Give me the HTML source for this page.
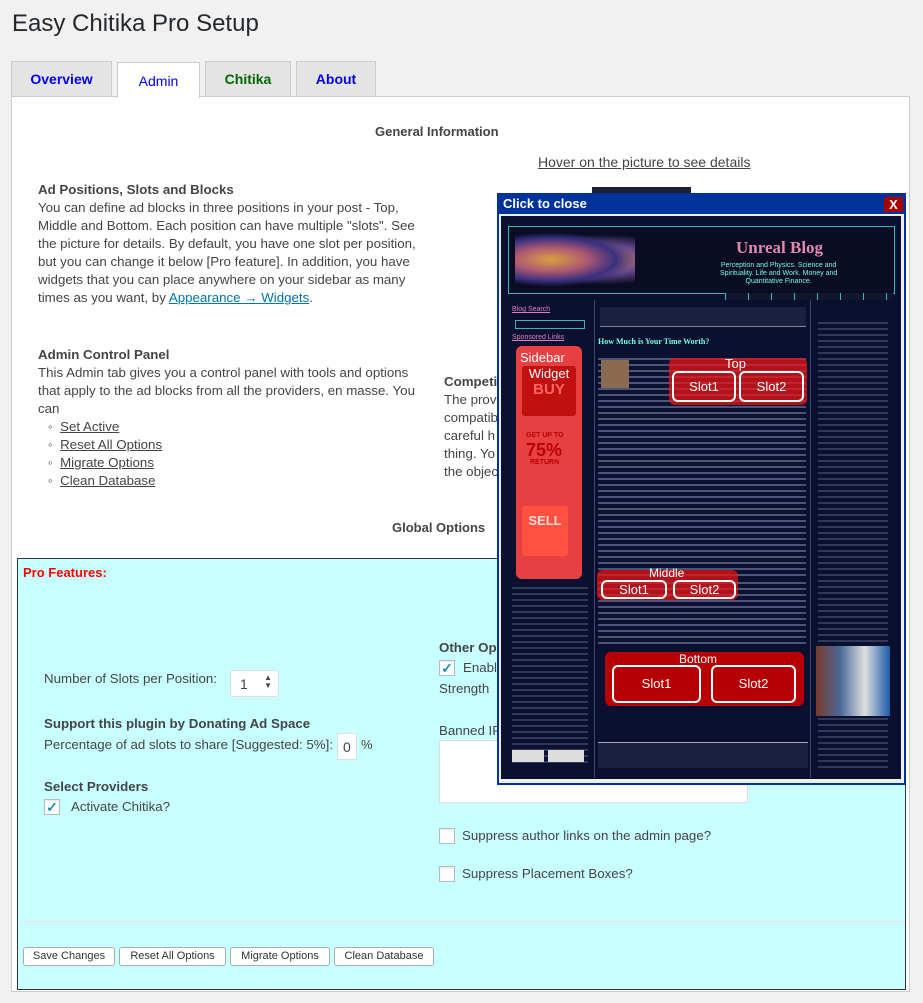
<!DOCTYPE html>
<html><head><meta charset="utf-8"><style>
*{box-sizing:border-box}
body{margin:0;width:923px;height:1003px;background:#f1f1f1;font-family:"Liberation Sans",sans-serif;color:#444;font-size:14px;position:relative;overflow:hidden}
.a{position:absolute;white-space:nowrap}
h1{position:absolute;left:12px;top:10px;margin:0;font-size:24px;font-weight:normal;color:#23282d}
.tab{position:absolute;top:61px;height:36px;border:1px solid #ccc;background:#e4e4e4;font-weight:bold;font-size:14px;text-align:center;line-height:34px}
.panel{position:absolute;left:11px;top:96px;width:899px;height:896px;background:#fff;border:1px solid #ccc}
a,.u{color:#0073aa;text-decoration:underline}
.lk{color:#444;text-decoration:underline}
.cb{position:absolute;width:16px;height:16px;border:1px solid #b4b9be;background:#fff;box-shadow:inset 0 1px 2px rgba(0,0,0,.1)}
.btn{position:absolute;top:947px;height:19px;border:1px solid #aaa;border-radius:3px;background:#fff;font-size:11px;line-height:17px;text-align:center;color:#333}
.red{position:absolute;background:rgba(235,20,20,.75);border-radius:6px}
.slot{position:absolute;border:2px solid #fff;border-radius:6px;color:#fff;font-size:13px;text-align:center}
.txt{position:absolute;background:repeating-linear-gradient(#0b1030 0 2px,#4a5578 2px 4px,#0b1030 4px 6px)}
</style></head><body>
<h1>Easy Chitika Pro Setup</h1>
<div class="tab" style="left:11px;width:101px;color:#0000ee">Overview</div>
<div class="tab" style="left:205px;width:86px;color:#006600">Chitika</div>
<div class="tab" style="left:296px;width:80px;color:#0000ee">About</div>
<div class="panel"></div>
<div class="tab" style="left:117px;width:83px;top:62px;height:36px;background:#fff;border-bottom:none;color:#0000ee;font-weight:normal;line-height:36px">Admin</div>

<div class="a" style="left:375px;top:124px;font-weight:bold;font-size:13px">General Information</div>
<div class="a lk" style="left:538px;top:154px">Hover on the picture to see details</div>

<div class="a" style="left:38px;top:181px;line-height:18px;font-size:13.3px">
<b>Ad Positions, Slots and Blocks</b><br>
You can define ad blocks in three positions in your post - Top,<br>
Middle and Bottom. Each position can have multiple "slots". See<br>
the picture for details. By default, you have one slot per position,<br>
but you can change it below [Pro feature]. In addition, you have<br>
widgets that you can place anywhere on your sidebar as many<br>
times as you want, by <a>Appearance → Widgets</a>.</div>

<div class="a" style="left:38px;top:346px;line-height:18px;font-size:13.3px">
<b>Admin Control Panel</b><br>
This Admin tab gives you a control panel with tools and options<br>
that apply to the ad blocks from all the providers, en masse. You<br>
can</div>
<div class="a" style="left:48px;top:418px;line-height:18px;font-size:13.3px">
◦ &nbsp;<span class="lk">Set Active</span><br>◦ &nbsp;<span class="lk">Reset All Options</span><br>◦ &nbsp;<span class="lk">Migrate Options</span><br>◦ &nbsp;<span class="lk">Clean Database</span></div>

<div class="a" style="left:444px;top:373px;line-height:18px;font-size:13.3px"><b>Competi</b><br>The prov<br>compatib<br>careful h<br>thing. Yo<br>the objec</div>
<div class="a" style="left:392px;top:520px;font-weight:bold;font-size:13px">Global Options</div>

<div style="position:absolute;left:17px;top:558px;width:889px;height:432px;background:#c8ffff;border:1px solid #333"></div>
<div class="a" style="left:23px;top:565px;color:#f00;font-weight:bold;font-size:13px">Pro Features:</div>
<div class="a" style="left:44px;top:671px;font-size:13.3px">Number of Slots per Position:</div>
<div style="position:absolute;left:230px;top:670px;width:49px;height:27px;background:#fff;border:1px solid #ddd;border-radius:3px;font-size:14px;padding:5px 9px">1<span style="position:absolute;right:6px;top:3px;font-size:8px;line-height:8px">▲<br>▼</span></div>
<div class="a" style="left:44px;top:716px;font-weight:bold;font-size:13.3px">Support this plugin by Donating Ad Space</div>
<div class="a" style="left:44px;top:737px;font-size:13.3px">Percentage of ad slots to share [Suggested: 5%]:</div>
<div style="position:absolute;left:337px;top:733px;width:20px;height:27px;background:#fff;border:1px solid #ddd;font-size:14px;padding:5px 5px">0</div>
<div class="a" style="left:361px;top:737px;font-size:13px">%</div>
<div class="a" style="left:44px;top:779px;font-weight:bold;font-size:13.3px">Select Providers</div>
<div class="cb" style="left:44px;top:799px;color:#1e8cbe;font-size:14px;line-height:14px;text-align:center;font-weight:bold">✓</div>
<div class="a" style="left:71px;top:799px;font-size:13.3px">Activate Chitika?</div>

<div class="a" style="left:439px;top:640px;font-weight:bold;font-size:13.3px">Other Op</div>
<div class="cb" style="left:439px;top:660px;color:#1e8cbe;font-size:14px;line-height:14px;text-align:center;font-weight:bold">✓</div>
<div class="a" style="left:463px;top:660px;font-size:13.3px">Enabl</div>
<div class="a" style="left:439px;top:681px;font-size:13.3px">Strength</div>
<div class="a" style="left:439px;top:723px;font-size:13.3px">Banned IP</div>
<div style="position:absolute;left:439px;top:740px;width:309px;height:63px;background:#fff;border:1px solid #ddd"></div>
<div class="cb" style="left:439px;top:828px"></div>
<div class="a" style="left:462px;top:828px;font-size:13.3px">Suppress author links on the admin page?</div>
<div class="cb" style="left:439px;top:866px"></div>
<div class="a" style="left:462px;top:866px;font-size:13.3px">Suppress Placement Boxes?</div>
<div style="position:absolute;left:23px;top:921px;width:882px;height:2px;background:#e4eeee"></div>
<div class="btn" style="left:23px;width:92px">Save Changes</div>
<div class="btn" style="left:119px;width:107px">Reset All Options</div>
<div class="btn" style="left:230px;width:100px">Migrate Options</div>
<div class="btn" style="left:334px;width:100px">Clean Database</div>

<!-- popup -->
<div style="position:absolute;left:592px;top:187px;width:99px;height:7px;background:#1a1f33"></div>
<div style="position:absolute;left:497px;top:193px;width:409px;height:592px;background:#eee;border:2px solid #003399"></div>
<div style="position:absolute;left:499px;top:195px;width:405px;height:19px;background:#003399;color:#fff;font-weight:bold;font-size:13px;padding:1px 4px">Click to close</div>
<div style="position:absolute;left:884px;top:197px;width:19px;height:15px;background:#a00;color:#fff;font-weight:bold;font-size:13px;text-align:center;line-height:15px">X</div>
<div style="position:absolute;left:501px;top:216px;width:400px;height:563px;background:#0b1030"></div>
<div style="position:absolute;left:508px;top:226px;width:387px;height:68px;border:1px solid #3cb4b4;background:#090c22"></div>
<div style="position:absolute;left:515px;top:232px;width:120px;height:55px;background:radial-gradient(ellipse at 30% 50%,#d8a040 0,#b05a70 30%,#3a3080 55%,transparent 70%),radial-gradient(ellipse at 75% 50%,#c88050 0,#6a4a90 35%,transparent 65%)"></div>
<div class="a" style="left:736px;top:238px;font-family:'Liberation Serif',serif;font-weight:bold;font-size:17px;color:#e08ab0">Unreal Blog</div>
<div class="a" style="left:720px;top:262px;font-size:7px;color:#7fd;line-height:8px;text-align:center">Perception and Physics. Science and<br>Spirituality. Life and Work. Money and<br>Quantitative Finance.</div>
<div style="position:absolute;left:725px;top:293px;width:168px;height:7px;background:repeating-linear-gradient(90deg,#3cb4b4 0 1px,#101530 1px 23px)"></div>
<div style="position:absolute;left:594px;top:300px;width:1px;height:478px;background:#3a4a70"></div>
<div style="position:absolute;left:810px;top:300px;width:1px;height:478px;background:#3a4a70"></div>
<div class="a" style="left:512px;top:306px;font-size:7px;color:#e080c0;text-decoration:underline">Blog Search</div>
<div style="position:absolute;left:515px;top:320px;width:70px;height:9px;border:1px solid #3cb4b4"></div>
<div class="a" style="left:512px;top:334px;font-size:7px;color:#e080c0;text-decoration:underline">Sponsored Links</div>
<div style="position:absolute;left:600px;top:307px;width:206px;height:20px;background:#1a2040;border-bottom:1px solid #888"></div>
<div class="a" style="left:598px;top:337px;font-family:'Liberation Serif',serif;font-weight:bold;font-size:8px;color:#7fd">How Much is Your Time Worth?</div>
<div class="txt" style="left:598px;top:356px;width:208px;height:220px"></div>
<div class="txt" style="left:598px;top:580px;width:208px;height:66px"></div>
<div style="position:absolute;left:601px;top:360px;width:28px;height:28px;background:#8a6a50"></div>
<div style="position:absolute;left:598px;top:742px;width:210px;height:26px;background:#1a2040;border-top:1px solid #aaa"></div>
<div class="txt" style="left:818px;top:320px;width:70px;height:450px;opacity:.6"></div>
<div style="position:absolute;left:816px;top:646px;width:74px;height:70px;background:linear-gradient(90deg,#7a3a2a,#4a6a9a 33%,#e0e0e0 66%,#1a5aaa)"></div>
<div class="txt" style="left:512px;top:585px;width:76px;height:180px;opacity:.6"></div>
<div style="position:absolute;left:512px;top:750px;width:32px;height:12px;background:#ddd"></div>
<div style="position:absolute;left:548px;top:750px;width:36px;height:12px;background:#ddd"></div>

<div class="red" style="left:516px;top:346px;width:66px;height:233px;background:rgba(255,70,70,.9)">
<div class="a" style="left:4px;top:4px;color:#fff;font-size:13px">Sidebar</div>
<div style="position:absolute;left:6px;top:20px;width:54px;height:50px;background:#c01010;border-radius:3px;color:#fff;font-size:13px;text-align:center">Widget<br><b style="font-size:15px;color:#f66">BUY</b></div>
<div class="a" style="left:10px;top:86px;color:#b00;font-size:7px;font-weight:bold">GET UP TO</div>
<div class="a" style="left:10px;top:94px;color:#b00;font-size:18px;font-weight:bold">75%</div>
<div class="a" style="left:14px;top:113px;color:#b00;font-size:7px;font-weight:bold">RETURN</div>
<div style="position:absolute;left:6px;top:160px;width:46px;height:50px;background:#ff5040;border-radius:3px;color:#fdd;font-size:13px;font-weight:bold;text-align:center;line-height:30px">SELL</div>
</div>
<div class="red" style="left:669px;top:358px;width:138px;height:47px">
<div class="a" style="left:56px;top:-2px;color:#fff;font-size:13px">Top</div>
<div class="slot" style="left:3px;top:13px;width:64px;height:31px;line-height:27px">Slot1</div>
<div class="slot" style="left:70px;top:13px;width:65px;height:31px;line-height:27px">Slot2</div>
</div>
<div class="red" style="left:597px;top:570px;width:141px;height:30px">
<div class="a" style="left:52px;top:-4px;color:#fff;font-size:12px">Middle</div>
<div class="slot" style="left:4px;top:10px;width:66px;height:19px;line-height:15px">Slot1</div>
<div class="slot" style="left:76px;top:10px;width:63px;height:19px;line-height:15px">Slot2</div>
</div>
<div class="red" style="left:605px;top:652px;width:199px;height:54px;background:rgba(200,0,0,.9)">
<div class="a" style="left:74px;top:0;color:#fff;font-size:12px">Bottom</div>
<div class="slot" style="left:7px;top:13px;width:89px;height:38px;line-height:34px">Slot1</div>
<div class="slot" style="left:106px;top:13px;width:85px;height:38px;line-height:34px">Slot2</div>
</div>
</body></html>
